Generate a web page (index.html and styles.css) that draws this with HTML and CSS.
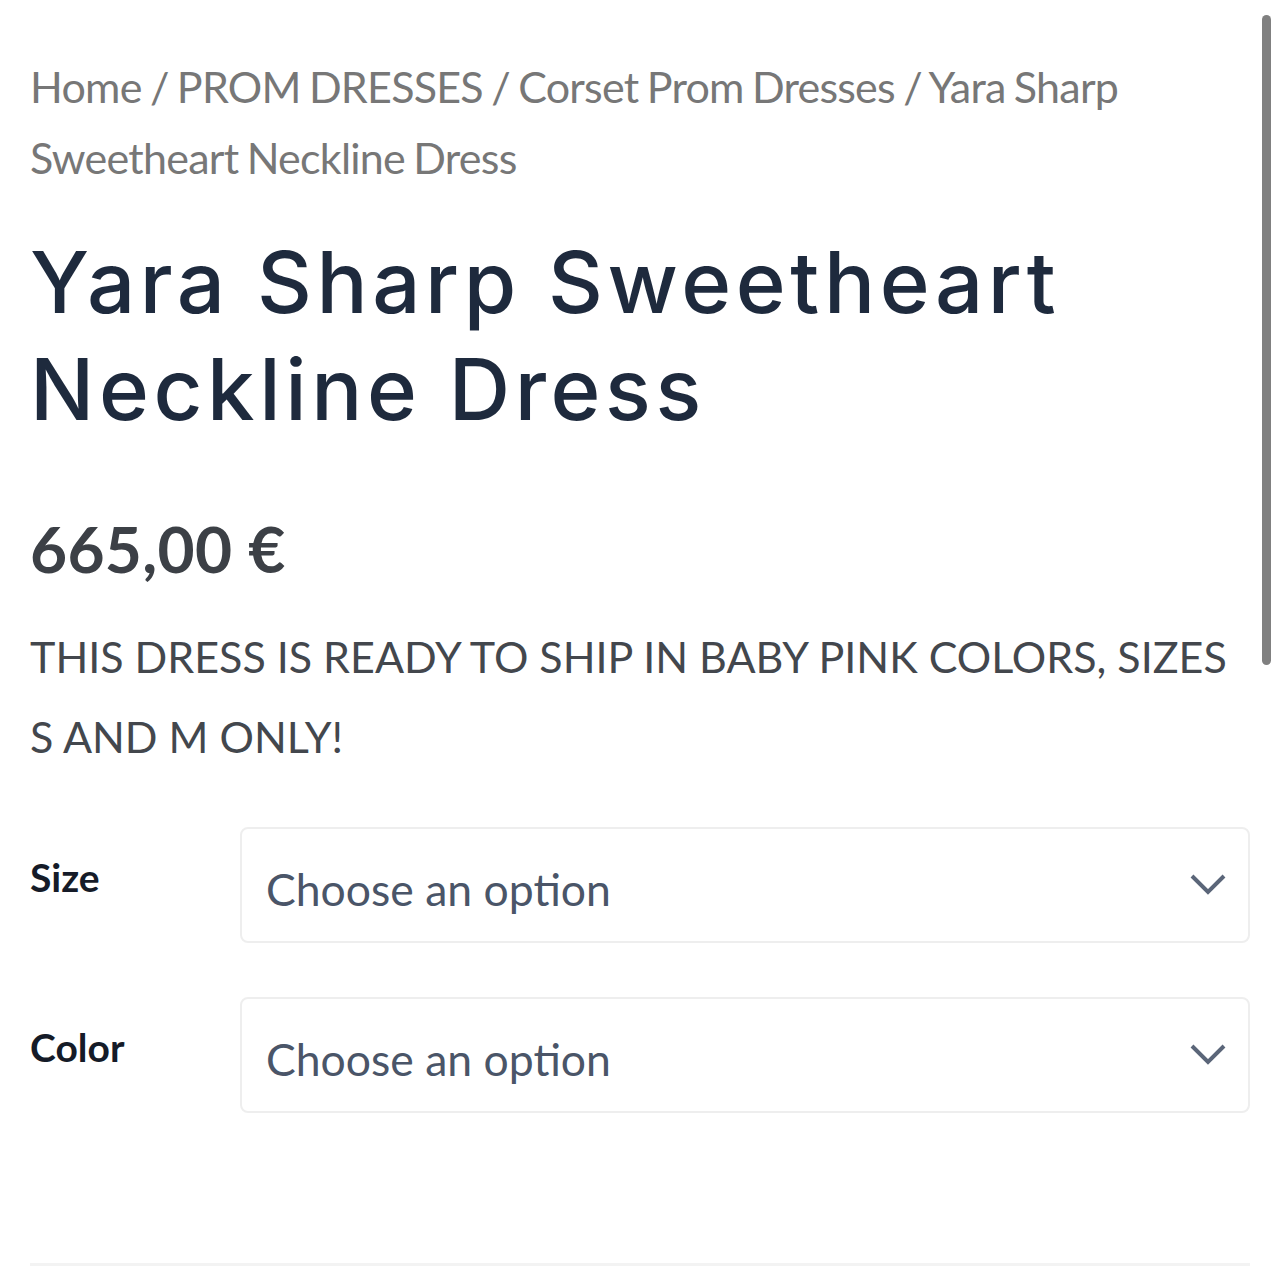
FILE: index.html
```html
<!DOCTYPE html>
<html lang="en">
<head>
<meta charset="utf-8">
<title>Yara Sharp Sweetheart Neckline Dress</title>
<link rel="stylesheet" href="styles.css">
</head>
<body>
<main class="product">
  <nav class="breadcrumb"><a href="#">Home</a> <span class="sep">/</span> <a href="#">PROM DRESSES</a> <span class="sep">/</span> <a href="#">Corset Prom Dresses</a> <span class="sep">/</span> <span class="current">Yara Sharp</span> <span class="current">Sweetheart Neckline Dress</span></nav>
  <h1 class="title">Yara Sharp Sweetheart Neckline Dress</h1>
  <p class="price">665,00&nbsp;€</p>
  <p class="desc">THIS DRESS IS READY TO SHIP IN BABY PINK COLORS, SIZES S AND M ONLY!</p>
  <div class="variations">
    <div class="row">
      <label class="label">Size</label>
      <div class="select"><span class="placeholder">Choose an option</span>
        <svg class="chev" viewBox="0 0 36 24" width="36" height="24"><path d="M2 3 L18 19 L34 3" fill="none" stroke="#5b6679" stroke-width="4"/></svg>
      </div>
    </div>
    <div class="row">
      <label class="label">Color</label>
      <div class="select"><span class="placeholder">Choose an option</span>
        <svg class="chev" viewBox="0 0 36 24" width="36" height="24"><path d="M2 3 L18 19 L34 3" fill="none" stroke="#5b6679" stroke-width="4"/></svg>
      </div>
    </div>
  </div>
  <hr class="divider">
</main>
<div class="scrollbar"></div>
</body>
</html>
```
FILE: styles.css
```css
html, body {
  margin: 0;
  padding: 0;
  background: #fff;
}
body {
  font-family: Lato, "Noto Sans", sans-serif;
}
.product {
  padding: 51px 30px 0 30px;
  width: 1220px;
}
.breadcrumb {
  font-size: 43px;
  line-height: 71px;
  color: #777;
  letter-spacing: -0.75px;
  word-spacing: -2px;
}
.breadcrumb a {
  color: #777;
  text-decoration: none;
}
.current {
  white-space: nowrap;
}
.title {
  font-family: Inter, "DejaVu Sans", sans-serif;
  font-weight: 500;
  font-size: 85px;
  line-height: 107px;
  color: #1e2a3d;
  margin: 36px 0 0 0;
  letter-spacing: 4.6px;
}
.price {
  font-size: 64px;
  font-weight: 700;
  color: #3c4046;
  margin: 66px 0 0 0;
  line-height: 80px;
  letter-spacing: 0.3px;
}
.desc {
  font-size: 43px;
  line-height: 80px;
  color: #43474d;
  margin: 28px 0 0 0;
}
.variations {
  margin-top: 50px;
  display: flex;
  flex-direction: column;
  gap: 54px;
}
.row {
  display: grid;
  grid-template-columns: 210px 1fr;
  align-items: start;
}
.label {
  font-size: 39px;
  font-weight: 700;
  color: #151b28;
  padding-top: 27px;
}
.select {
  height: 112px;
  border: 2px solid #eeeeee;
  border-radius: 8px;
  display: flex;
  align-items: center;
  justify-content: space-between;
  padding: 0 22px 0 24px;
}
.placeholder {
  font-size: 44.5px;
  color: #4a5568;
  padding-top: 6px;
}
.chev {
  display: block;
}
.divider {
  margin: 150px 0 0 0;
  border: 0;
  height: 3px;
  background: #f3f3f3;
}
.scrollbar {
  position: fixed;
  top: 15px;
  right: 9px;
  width: 9px;
  height: 650px;
  border-radius: 5px;
  background: #808080;
}
```
